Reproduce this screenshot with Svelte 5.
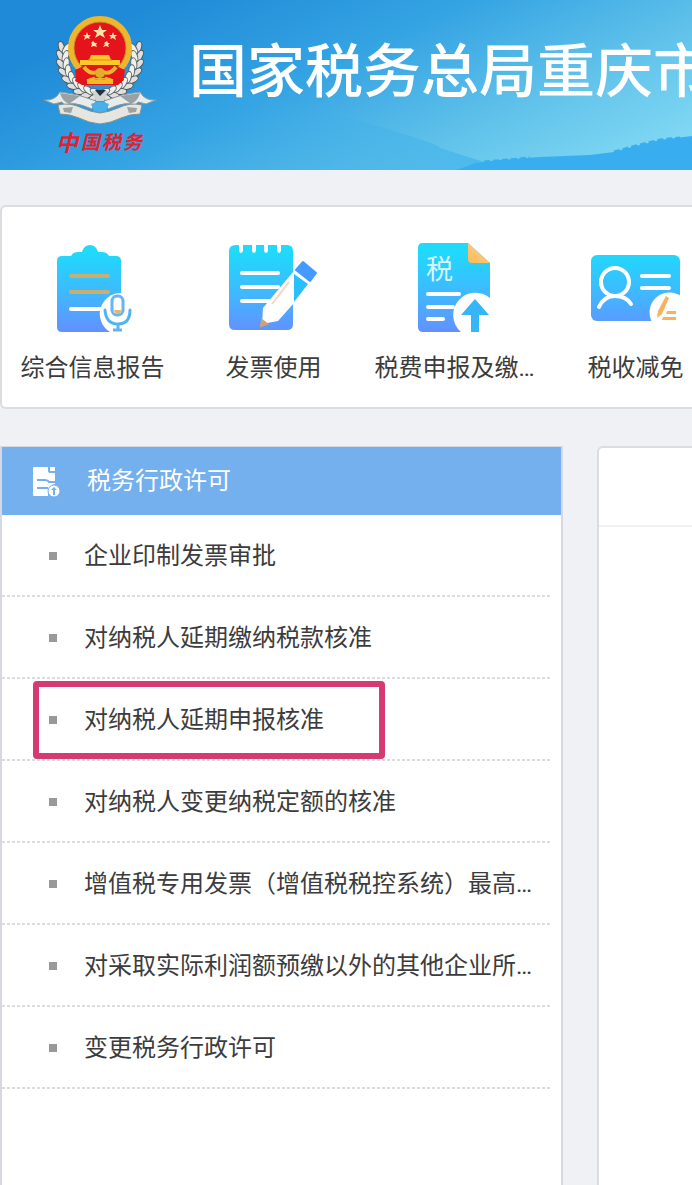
<script>
const shortcuts = [
    {icon: "report", label: "综合信息报告"},
    {icon: "invoice", label: "发票使用"},
    {icon: "declare", label: "税费申报及缴…"},
    {icon: "relief", label: "税收减免"},
];
const permits = [
    "企业印制发票审批",
    "对纳税人延期缴纳税款核准",
    "对纳税人延期申报核准",
    "对纳税人变更纳税定额的核准",
    "增值税专用发票（增值税税控系统）最高…",
    "对采取实际利润额预缴以外的其他企业所…",
    "变更税务行政许可",
];
let marked = 2;

// leaves of the wreath, from the top of each side down to the knot
const leaves = [];
for (let i = 0; i < 9; i++) {
    const a = (196 - i * 12) * Math.PI / 180;
    leaves.push({x: 60 + 37 * Math.cos(a), y: 47 + 38 * Math.sin(a), r: 8 - i * 12});
}
</script>

<div class="page">
    <header>
        <svg class="hills" viewBox="0 0 692 170" preserveAspectRatio="none" aria-hidden="true">
            <defs>
                <linearGradient id="far" x1="0" y1="0" x2="1" y2="0">
                    <stop offset="0" stop-color="#2ea2e4" stop-opacity="0"/>
                    <stop offset="0.6" stop-color="#43b1e8" stop-opacity="0.5"/>
                    <stop offset="1" stop-color="#4ab8ec" stop-opacity="0.9"/>
                </linearGradient>
            </defs>
            <path d="M180 85 Q280 98 360 121 T440 148 L484 162 V170 H180Z" fill="url(#far)"/>
            <path d="M456 170 L476 163 L500 160 L540 157 L590 155 L614 152 L636 146 L660 140 L692 136 V170Z" fill="#38aef1"/>
            <path d="M484 162 L530 158 M614 152 L636 146 L660 140 L680 138" fill="none" stroke="#38aef1" stroke-width="3" stroke-dasharray="6 3"/>
        </svg>
        <svg class="emblem" viewBox="0 0 120 150" role="img" aria-label="中国税务">
            {#each [false, true] as flip}
                <g transform={flip ? "translate(120 0) scale(-1 1)" : null}>
                    {#each leaves as l}
                        <g transform="translate({l.x} {l.y}) rotate({l.r})">
                            <ellipse cx="-3" cy="0" rx="3" ry="6" transform="rotate(-24)" fill="#dfe0df" stroke="#4d5759" stroke-width="1"/>
                            <ellipse cx="3" cy="1" rx="3" ry="6" transform="rotate(24)" fill="#f1f0eb" stroke="#59666b" stroke-width="1"/>
                        </g>
                    {/each}
                    <path d="M4 90 Q15 91 20 82 Q27 83 38 85 L56 91 L52 99 Q31 90 25 96 L22 92 L14 94Z" fill="#e9ebea" stroke="#8a999f" stroke-width="1"/>
                    <path d="M20 83 L40 86 L29 94 Q22 91 20 83" fill="#98a1a3"/>
                    <path d="M18 95 Q30 92 42 98 Q51 102 60 103 V114 Q49 113 39 108 Q30 104 20 104Z" fill="#e5e6e2"/>
                    <path d="M60 114 Q49 113 39 108 Q30 104 20 104 L18 95 Q30 92 42 98 Q51 102 60 103" fill="none" stroke="#84908e" stroke-width="1"/>
                    <path d="M23 98 L33 97 L31 103 L24 102Z" fill="#9ca2a0"/>
                </g>
            {/each}
            <path d="M51 94 Q60 89 69 94 L66 101 Q60 103 54 101Z" fill="#48b0ea"/>
            <path d="M52 81 H68 L64 91 H56Z" fill="#cfd4d5"/>
            <path d="M55 80 H66 L60 86Z" fill="#24333b"/>
            <path d="M39 54 H81 L84 70 L78 75 H42 L35 71Z" fill="#e2131b"/>
            <circle cx="60" cy="38" r="29" fill="#e5131b" stroke="#edb62e" stroke-width="6"/>
            <circle cx="60" cy="38" r="26" fill="none" stroke="#c98f22" stroke-width="1"/>
            <path d="M60 15 L62 20 H67 L63 23 L65 28 L60 25 L55 28 L57 23 L53 20 H58Z" fill="#ffe6a6"/>
            <path d="M47 22 L48 25 L51 25 L49 27 L50 29 L47 28 L44 30 L45 27 L43 25 H46Z M73 22 L74 25 H77 L75 27 L76 30 L73 28 L70 29 L71 27 L69 25 H72Z" fill="#ffe6a6"/>
            <path d="M53 31 L55 33 H57 L56 35 L57 37 L54 36 L51 37 L52 34 L51 33Z M67 31 L68 33 H70 L68 35 L69 37 L66 36 L63 37 L65 34 L64 33Z" fill="#ffe6a6"/>
            <path d="M51 45 H69 L71 50 H80 V55 H40 V50 H49Z" fill="#f8c927"/>
            <path d="M48 50 H72" stroke="#e98c1b" stroke-width="1"/>
            <path d="M35 60 L44 56 Q52 62 60 58 Q68 62 76 56 L85 60 L84 68 H36Z" fill="#e5131b"/>
            <path d="M44 57 Q50 65 57 62 M76 57 Q70 65 63 62" fill="none" stroke="#edb62e" stroke-width="4"/>
            <circle cx="60" cy="63" r="5" fill="#e1ae29"/>
            <path d="M47 71 L55 68 M73 71 L65 68" stroke="#edb62e" stroke-width="3"/>
            <path d="M47 72 H73" stroke="#f2bb24" stroke-width="4"/>
            <g class="seal">
                <text x="16" y="141" font-size="22">中</text>
                <text x="41" y="139" font-size="19">国</text>
                <text x="62" y="139" font-size="19">税</text>
                <text x="83" y="139" font-size="19">务</text>
            </g>
        </svg>
        <h1>国家税务总局重庆市</h1>
    </header>

    <nav class="shortcuts">
        {#each shortcuts as s}
            <a href="#{s.icon}">
                <svg class="icon" viewBox="1 0 100 100" aria-hidden="true">
                    <defs>
                        <linearGradient id="blue-{s.icon}" gradientUnits="userSpaceOnUse" x1="0" y1="15" x2="0" y2="95">
                            <stop offset="0" stop-color="#20d9fb"/>
                            <stop offset="0.5" stop-color="#3fb9ff"/>
                            <stop offset="1" stop-color="#648fff"/>
                        </linearGradient>
                        <linearGradient id="corner-{s.icon}" x1="0" y1="1" x2="1" y2="0">
                            <stop offset="0" stop-color="#ffb952"/>
                            <stop offset="1" stop-color="#f5d49b"/>
                        </linearGradient>
                    </defs>
                    {#if s.icon == "report"}
                        <path d="M20 18 H29 Q31 14 36 14 H40 Q42 7 48 7 T56 14 H60 Q65 14 67 18 H74 Q79 18 79 23 V89 Q79 94 74 94 H20 Q15 94 15 89 V23 Q15 18 20 18Z" fill="url(#blue-report)"/>
                        <path d="M29 38 H66 M29 54 H66" stroke="#c8ae70" stroke-width="4" stroke-linecap="round"/>
                        <path d="M29 71 H61" stroke="#fff" stroke-width="4" stroke-linecap="round"/>
                        <path d="M79 55 A21 21 0 0 0 68 94 H80Z" fill="#fff"/>
                        <rect x="70" y="58" width="11" height="19" rx="5" fill="#fff" stroke="#64b5f1" stroke-width="3"/>
                        <path d="M72 72 H79 Q79 76 76 76 T72 72" fill="#e3b66e"/>
                        <path d="M63 72 Q64 86 76 86 T88 72" fill="none" stroke="#50b5ef" stroke-width="3" stroke-linecap="round"/>
                        <path d="M76 86 V92 M71 92 H80" stroke="#65b2f3" stroke-width="3"/>
                    {:else if s.icon == "invoice"}
                        <path d="M13 7 H16 V13 Q18 17 20 13 V7 H29 V13 Q31 17 33 13 V7 H41 V13 Q43 17 45 13 V7 H54 V13 Q56 17 58 13 V7 H64 Q70 7 70 13 V86 Q70 92 64 92 H12 Q6 92 6 86 V13 Q6 7 13 7Z" fill="url(#blue-invoice)"/>
                        <path d="M19 35 H55 M19 49 H55 M19 63 H48" stroke="#fff" stroke-width="4" stroke-linecap="round"/>
                        <path d="M70 34 L40 70 L39 86 L55 83 L71 65Z" fill="#fff"/>
                        <path d="M71 36 L85 46 L71 64Z" fill="#28bffa"/>
                        <path d="M80 24 L93 35 L87 43 L73 32Z" fill="#459aff" stroke="#459aff" stroke-width="2" stroke-linejoin="round"/>
                        <path d="M66 44 L49 66" stroke="#f7d3c2" stroke-width="2"/>
                        <path d="M39 82 L44 86 L38 88Z" fill="#cda278" stroke="#cda278" stroke-width="2"/>
                    {:else if s.icon == "declare"}
                        <path d="M19 5 H64 L86 25 V89 Q86 94 81 94 H19 Q14 94 14 89 V10 Q14 5 19 5Z" fill="url(#blue-declare)"/>
                        <path d="M64 5 L86 25 H68 Q64 25 64 21Z" fill="url(#corner-declare)"/>
                        <text class="tax" x="22" y="41">税</text>
                        <path d="M24 56 H55 M24 69 H49 M24 81 H39" stroke="#fff" stroke-width="4" stroke-linecap="round"/>
                        <path d="M86 60 A20 20 0 0 0 57 94 H87V60Z" fill="#fff"/>
                        <path d="M71 61 L85 77 H75 V94 H67 V77 H57Z" fill="#36b5f8"/>
                    {:else}
                        <rect x="6" y="17" width="89" height="66" rx="6" fill="url(#blue-relief)"/>
                        <circle cx="30" cy="44" r="14" fill="none" stroke="#fff" stroke-width="4"/>
                        <path d="M14 69 Q19 58 30 58 T46 66" fill="none" stroke="#fff" stroke-width="4" stroke-linecap="round"/>
                        <path d="M57 38 H84 M57 50 H84" stroke="#fff" stroke-width="4" stroke-linecap="round"/>
                        <path d="M96 58 A20 20 0 0 0 67 84 H96Z" fill="#fff"/>
                        <path d="M81 58 L84 60 L77 76 L72 80 L73 73Z M82 73 H91 V76 H81Z M78 79 H91 V82 H77Z" fill="#f7b25d"/>
                    {/if}
                </svg>
                <span>{s.label}</span>
            </a>
        {/each}
    </nav>

    <main>
        <aside>
            <h2>
                <svg viewBox="0 0 30 34" aria-hidden="true">
                    <path d="M3 3 H17 V7 Q17 9 19 9 H24 V20 Q16 21 17 32 H3 Q2 32 2 31 V4 Q2 3 3 3Z M19 3 H24 V7 H19Z" fill="#fff"/>
                    <path d="M6 16 H14 Q17 16 18 18 H24 M6 24 H17" fill="none" stroke="#74afee" stroke-width="2"/>
                    <circle cx="23" cy="27" r="6" fill="#fff" stroke="#74afee" stroke-width="1"/>
                    <path d="M23 23 L26 26 H24 V31 H22 V26 H20Z" fill="#74afee"/>
                </svg>
                税务行政许可
            </h2>
            <ul>
                {#each permits as permit, i}
                    <li class:marked={i == marked}><a href="#permit-{i}">{permit}</a></li>
                {/each}
            </ul>
        </aside>
        <section><div class="tabs"></div></section>
    </main>
</div>

<style>
    :global(body){
        margin: 0;
        background: #eff1f5;
    }
    .page{
        display: flex;
        flex-direction: column;
        box-sizing: border-box;
        min-height: 100vh;
        overflow: hidden;
        font-family: Roboto, "Noto Sans CJK SC", sans-serif;
        font-size: 24px;
        line-height: 32px;
        color: #3c3c3c;
    }
    a{
        color: inherit;
        text-decoration: none;
    }
    header{
        position: relative;
        display: flex;
        align-items: flex-start;
        gap: 29px;
        height: 160px;
        padding: 10px 0 0 40px;
        background: linear-gradient(155deg, #1f8ad7 15%, #35a4e3 45%, #5fc1ea 70%, #8adff6 100%);
    }
    .hills{
        position: absolute;
        inset: 0;
        width: 100%;
        height: 100%;
    }
    .emblem{
        position: relative;
        flex: none;
        width: 120px;
        height: 150px;
    }
    .seal{
        fill: #e3202e;
        font-family: "Noto Sans CJK SC", sans-serif;
        font-weight: 700;
        font-style: italic;
    }
    h1{
        position: relative;
        margin: 0;
        padding-top: 22px;
        font-size: 58px;
        line-height: 80px;
        font-weight: 500;
        white-space: nowrap;
        color: #fff;
    }
    .shortcuts{
        display: grid;
        grid-auto-flow: column;
        grid-auto-columns: 181px;
        margin-top: 35px;
        padding: 31px 0 23px;
        border: 2px solid #dadce2;
        border-right: 0;
        border-radius: 6px 0 0 6px;
        background: #fff;
    }
    .shortcuts a{
        display: flex;
        flex-direction: column;
        align-items: center;
        gap: 14px;
        white-space: nowrap;
    }
    .icon{
        width: 100px;
        height: 100px;
    }
    .tax{
        fill: #d9f7ff;
        font-size: 27px;
    }
    main{
        display: flex;
        flex: 1;
        gap: 34px;
        margin-top: 37px;
    }
    aside{
        flex: none;
        box-sizing: border-box;
        width: 563px;
        border: solid #d5d8e0;
        border-width: 1px 2px 0 2px;
        background: #fff;
    }
    h2{
        display: flex;
        align-items: center;
        gap: 26px;
        height: 68px;
        margin: 0;
        padding-left: 29px;
        box-sizing: border-box;
        background: #74afee;
        color: #fff;
        font-size: 24px;
        font-weight: 400;
    }
    h2 svg{
        width: 30px;
        height: 34px;
    }
    ul{
        margin: 0 11px 0 0;
        padding: 0;
        list-style: none;
    }
    li{
        position: relative;
        display: flex;
        align-items: center;
        gap: 27px;
        height: 82px;
        box-sizing: border-box;
        padding-left: 47px;
        background: repeating-linear-gradient(90deg, #dcdcdc 0 3px, #fff 3px 5px) bottom / 100% 2px no-repeat;
        white-space: nowrap;
    }
    li::before{
        content: "";
        width: 8px;
        height: 8px;
        background: #999;
    }
    .marked::after{
        content: "";
        position: absolute;
        top: 2px;
        bottom: 2px;
        left: 31px;
        width: 340px;
        border: 6px solid #d63a73;
        border-radius: 4px;
    }
    section{
        flex: 1;
        border: solid #dadce2;
        border-width: 2px 0 0 2px;
        border-radius: 6px 0 0 0;
        background: #fff;
    }
    .tabs{
        height: 77px;
        border-bottom: 2px solid #f0f1f3;
    }
</style>
